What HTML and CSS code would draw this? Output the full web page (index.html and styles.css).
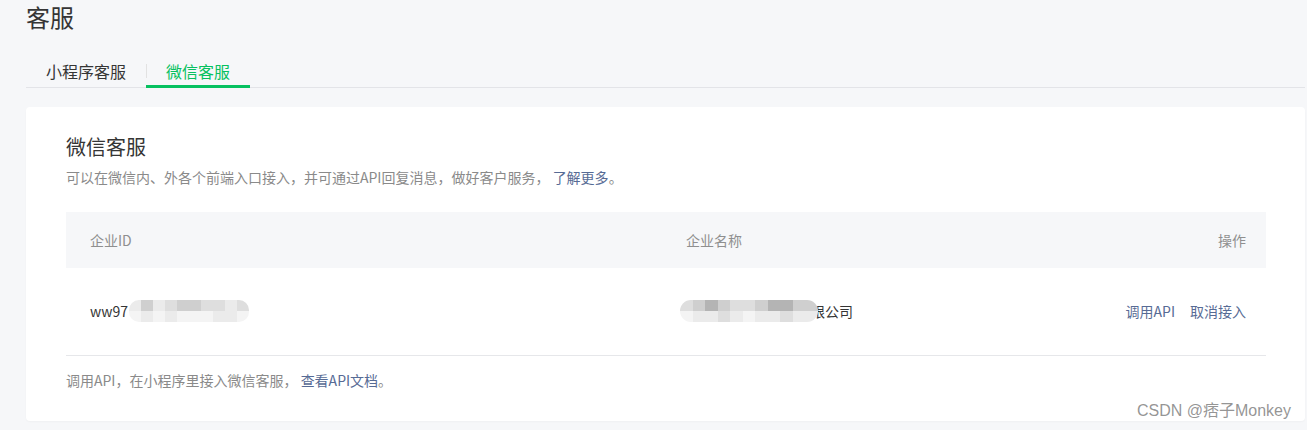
FILE: index.html
```html
<!DOCTYPE html>
<html lang="zh-CN">
<head>
<meta charset="utf-8">
<title>客服</title>
<link rel="stylesheet" href="styles.css">
</head>
<body>
<div class="page">
  <h1 class="page-title">客服</h1>
  <div class="tabs">
    <a class="tab">小程序客服</a>
    <span class="tab-sep"></span>
    <a class="tab active">微信客服</a>
  </div>
  <div class="card">
    <h2 class="card-title">微信客服</h2>
    <p class="desc">可以在微信内、外各个前端入口接入，并可通过API回复消息，做好客户服务， <a class="link">了解更多</a>。</p>
    <div class="table">
      <div class="row head">
        <div class="cell">企业ID</div>
        <div class="cell">企业名称</div>
        <div class="cell right">操作</div>
      </div>
      <div class="row body">
        <div class="cell"><span>ww97</span><span class="mosaic m-id">
          <span class="mrow"><i class="g1"></i><i class="g3"></i><i class="g1"></i><i class="g2"></i><i class="g3"></i><i class="g3"></i><i class="g2"></i><i class="g2"></i><i class="g1"></i><i class="g2"></i></span>
          <span class="mrow"><i class="g0"></i><i class="g1"></i><i class="g0"></i><i class="g1"></i><i class="g0"></i><i class="g0"></i><i class="g0"></i><i class="g1"></i><i class="g1"></i><i class="g0"></i></span>
        </span></div>
        <div class="cell"><span class="name-wrap"><span class="mosaic m-name">
          <span class="mrow"><i class="g2"></i><i class="g3"></i><i class="g4"></i><i class="g3"></i><i class="g2"></i><i class="g2"></i><i class="g3"></i><i class="g4"></i><i class="g4"></i><i class="g3"></i><i class="g3"></i></span>
          <span class="mrow"><i class="g0"></i><i class="g1"></i><i class="g1"></i><i class="g2"></i><i class="g1"></i><i class="g0"></i><i class="g1"></i><i class="g1"></i><i class="g2"></i><i class="g1"></i><i class="g1"></i></span>
        </span><span class="name-text">限公司</span></span></div>
        <div class="cell right actions"><a class="link">调用API</a><a class="link">取消接入</a></div>
      </div>
    </div>
    <p class="foot">调用API，在小程序里接入微信客服， <a class="link">查看API文档</a>。</p>
  </div>
  <div class="watermark">CSDN @痞子Monkey</div>
</div>
</body>
</html>
```

FILE: styles.css
```css
* { box-sizing: border-box; }
html, body { margin: 0; padding: 0; }
body {
  background: #f6f7f9;
  font-family: "Noto Sans CJK SC", "Noto Sans", sans-serif;
  color: #353535;
  width: 1307px;
  height: 430px;
  overflow: hidden;
}
.page {
  position: relative;
  padding: 0 2px 0 26px;
  height: 430px;
}
.page-title {
  margin: 0;
  font-size: 24px;
  line-height: 34px;
  font-weight: 400;
  color: #353535;
}
.tabs {
  display: flex;
  align-items: center;
  margin-top: 25px;
  border-bottom: 1px solid #e3e4e8;
}
.tab {
  display: block;
  padding: 0 20px 2px;
  font-size: 16px;
  line-height: 24px;
  color: #353535;
  border-bottom: 3px solid transparent;
  margin-bottom: -1px;
  cursor: pointer;
}
.tab.active {
  color: #07c160;
  border-bottom-color: #07c160;
}
.tab-sep {
  width: 1px;
  height: 14px;
  background: #e2e2e2;
  margin-top: -4px;
  margin-right: -1px;
}
.card {
  margin-top: 19px;
  background: #fff;
  border-radius: 4px;
  box-shadow: 0 1px 2px rgba(0,0,0,0.03);
  padding: 26px 39px 31px 40px;
  height: 314px;
}
.card-title {
  margin: 0;
  font-size: 20px;
  line-height: 28px;
  font-weight: 400;
  color: #353535;
}
.desc {
  margin: 6px 0 0;
  font-size: 14px;
  line-height: 20px;
  color: #8a8a8a;
}
.link {
  color: #576b95;
  text-decoration: none;
  cursor: pointer;
}
.table {
  margin-top: 25px;
  width: 1200px;
}
.row {
  display: grid;
  grid-template-columns: 596px 1fr 240px;
  align-items: center;
  font-size: 14px;
}
.row.head {
  height: 56px;
  background: #f6f7f9;
  color: #8f8f8f;
}
.row.body {
  height: 88px;
  border-bottom: 1px solid #e6e7ea;
  color: #353535;
  padding-bottom: 2px;
}
.cell {
  padding: 0 24px;
  display: flex;
  align-items: center;
  line-height: 20px;
}
.cell.right {
  justify-content: flex-end;
  padding-right: 20px;
}
.actions { gap: 15px; }
.mosaic {
  display: inline-flex;
  flex-direction: column;
  border-radius: 10px;
  overflow: hidden;
  filter: blur(0.6px);
}
.m-id { margin-left: 1px; width: 120px; }
.m-name { width: 138px; margin-left: -6px; position: relative; z-index: 1; border-radius: 11px; }
.mrow { display: flex; height: 11px; }
.mrow i { flex: 1; display: block; }
.g0 { background: #f4f4f4; }
.g1 { background: #ebebeb; }
.g2 { background: #dedede; }
.g3 { background: #cfcfcf; }
.g4 { background: #b4b4b4; }
.name-wrap { display: inline-flex; align-items: center; }
.name-text { margin-left: -7px; }
.foot {
  margin: 14px 0 0;
  font-size: 14px;
  line-height: 20px;
  color: #8a8a8a;
}
.watermark {
  position: absolute;
  right: 16px;
  bottom: 9px;
  font-family: "Liberation Sans", "Noto Sans CJK SC", sans-serif;
  font-size: 16px;
  line-height: 20px;
  color: rgba(130,130,130,0.85);
  text-shadow: 0 0 2px #fff;
}
```
